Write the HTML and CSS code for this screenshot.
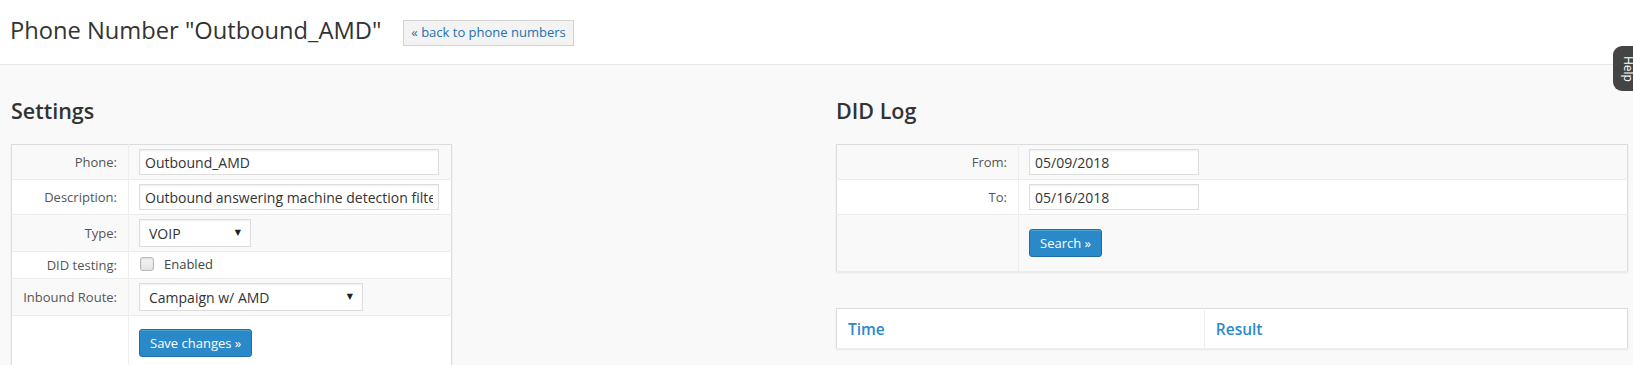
FILE: index.html
```html
<!DOCTYPE html>
<html lang="en">
<head>
    <meta charset="UTF-8">
    <meta name="viewport" content="width=device-width, initial-scale=1.0">
    <title>Phone Number "Outbound_AMD"</title>
    <link rel="stylesheet" href="styles.css">
</head>
<body>
    <header class="page-header">
        <h1>Phone Number "Outbound_AMD"</h1>
        <a class="back-btn" href="#">&laquo; back to phone numbers</a>
    </header>

    <div class="columns">
        <div class="col">
            <h2>Settings</h2>
            <table class="form-table settings-panel">
                <tr>
                    <th>Phone:</th>
                    <td><input type="text" class="text-input wide" value="Outbound_AMD"></td>
                </tr>
                <tr>
                    <th>Description:</th>
                    <td><input type="text" class="text-input wide" value="Outbound answering machine detection filter"></td>
                </tr>
                <tr>
                    <th>Type:</th>
                    <td>
                        <span class="select-wrap type-select">
                            <select><option>VOIP</option></select>
                        </span>
                    </td>
                </tr>
                <tr class="check-row">
                    <th>DID testing:</th>
                    <td><label class="check"><input type="checkbox"> Enabled</label></td>
                </tr>
                <tr>
                    <th>Inbound Route:</th>
                    <td>
                        <span class="select-wrap route-select">
                            <select><option>Campaign w/ AMD</option></select>
                        </span>
                    </td>
                </tr>
                <tr class="actions">
                    <th></th>
                    <td><button type="button" class="btn-primary">Save changes &raquo;</button></td>
                </tr>
            </table>
        </div>

        <div class="col">
            <h2>DID Log</h2>
            <table class="form-table log-panel">
                <tr>
                    <th>From:</th>
                    <td><input type="text" class="text-input date" value="05/09/2018"></td>
                </tr>
                <tr>
                    <th>To:</th>
                    <td><input type="text" class="text-input date" value="05/16/2018"></td>
                </tr>
                <tr class="actions">
                    <th></th>
                    <td><button type="button" class="btn-primary">Search &raquo;</button></td>
                </tr>
            </table>

            <table class="log-table">
                <tr>
                    <th class="time-col">Time</th>
                    <th>Result</th>
                </tr>
            </table>
        </div>
    </div>

    <div class="help-tab">Help</div>
</body>
</html>
```

FILE: styles.css
```css
body { margin: 0; background: #f9f9f9; font-family: "Open Sans", "DejaVu Sans", sans-serif; color: #333; }

.page-header { display: flex; align-items: flex-start; height: 50px; padding: 14px 0 0 10px; background: #fff; border-bottom: 1px solid #e8e8e8; }
.page-header h1 { margin: 0; font-size: 23.7px; font-weight: 400; line-height: 32px; color: #333; }
.back-btn { margin: 6px 0 0 22px; height: 24px; padding: 0 7px; line-height: 23px; font-size: 13px; color: #2271b1; text-decoration: none; background: #f3f3f3; border: 1px solid #d2d2d2; }

.columns { display: grid; grid-template-columns: 1fr 1fr; column-gap: 33px; padding: 32px 5px 0 11px; }
.col h2 { margin: 0 0 19px; font-size: 21.5px; font-weight: 600; line-height: 28px; color: #333; }

.form-table { border-collapse: collapse; border: 1px solid #dcdcdc; box-shadow: 0 1px 2px rgba(0,0,0,.08); }
.form-table tr { background: #f9f9f9; border-bottom: 1px solid #ececec; }
.form-table tr:nth-child(even) { background: #fff; }
.form-table th { padding: 4px 11px 4px 8px; text-align: right; font-size: 13px; font-weight: 400; color: #555; border-right: 1px solid #eee; }
.form-table td { padding: 4px 10px; font-size: 13px; line-height: 16px; }
.form-table .actions td { padding: 13px 10px 14px; }
.form-table .actions th { border-right: 1px solid #eee; }

.settings-panel { width: 441px; }
.settings-panel th { width: 97px; }
.log-panel { width: 100%; }
.log-panel th { width: 162px; }
.log-panel .actions td { padding: 14px 10px 14px; }

.text-input { box-sizing: border-box; height: 26px; padding: 0 5px; font-family: inherit; font-size: 14px; color: #333; background: #fff; border: 1px solid #ddd; box-shadow: inset 0 1px 2px rgba(0,0,0,.07); outline: none; }
.text-input.wide { width: 300px; }
.text-input.date { width: 170px; }

.select-wrap { position: relative; display: inline-block; vertical-align: middle; }
.select-wrap select { box-sizing: border-box; height: 28px; padding: 0 24px 0 9px; font-family: inherit; font-size: 14px; color: #333; background: #fff; border: 1px solid #ddd; border-radius: 0; -webkit-appearance: none; appearance: none; box-shadow: inset 0 1px 2px rgba(0,0,0,.07); }
.select-wrap::after { content: "\25BC"; position: absolute; right: 10px; top: 8px; font-size: 8px; line-height: 10px; color: #222; pointer-events: none; }
.type-select select { width: 112px; }
.route-select select { width: 224px; }

.check { display: inline-flex; align-items: center; color: #444; }
.check input { -webkit-appearance: none; appearance: none; box-sizing: border-box; width: 14px; height: 14px; margin: 1px 10px 1px 1px; background: linear-gradient(#f5f5f5, #e4e4e4); border: 1px solid #b4b9be; border-radius: 3px; box-shadow: inset 0 1px 2px rgba(0,0,0,.1); }

.btn-primary { height: 28px; padding: 0 10px; font-family: inherit; font-size: 13px; color: #fff; background: #2a89c9; border: 1px solid #1f6fa6; border-radius: 3px; box-shadow: inset 0 1px 0 rgba(120,200,230,.4); }

.log-table { width: 100%; margin-top: 36px; border-collapse: collapse; background: #fff; border: 1px solid #dcdcdc; box-shadow: 0 1px 2px rgba(0,0,0,.08); }
.log-table th { padding: 10px 11px 9px; text-align: left; font-size: 15.5px; font-weight: 600; line-height: 20px; color: #2a8ad0; border-bottom: 1px solid #ececec; }
.log-table .time-col { width: 46.5%; border-right: 1px solid #eee; }

.help-tab { position: fixed; top: 46px; right: -10px; width: 30px; height: 45px; display: flex; align-items: center; justify-content: center; writing-mode: vertical-rl; font-size: 12px; color: #fff; background: #444; border-radius: 9px 0 0 9px; }
```
